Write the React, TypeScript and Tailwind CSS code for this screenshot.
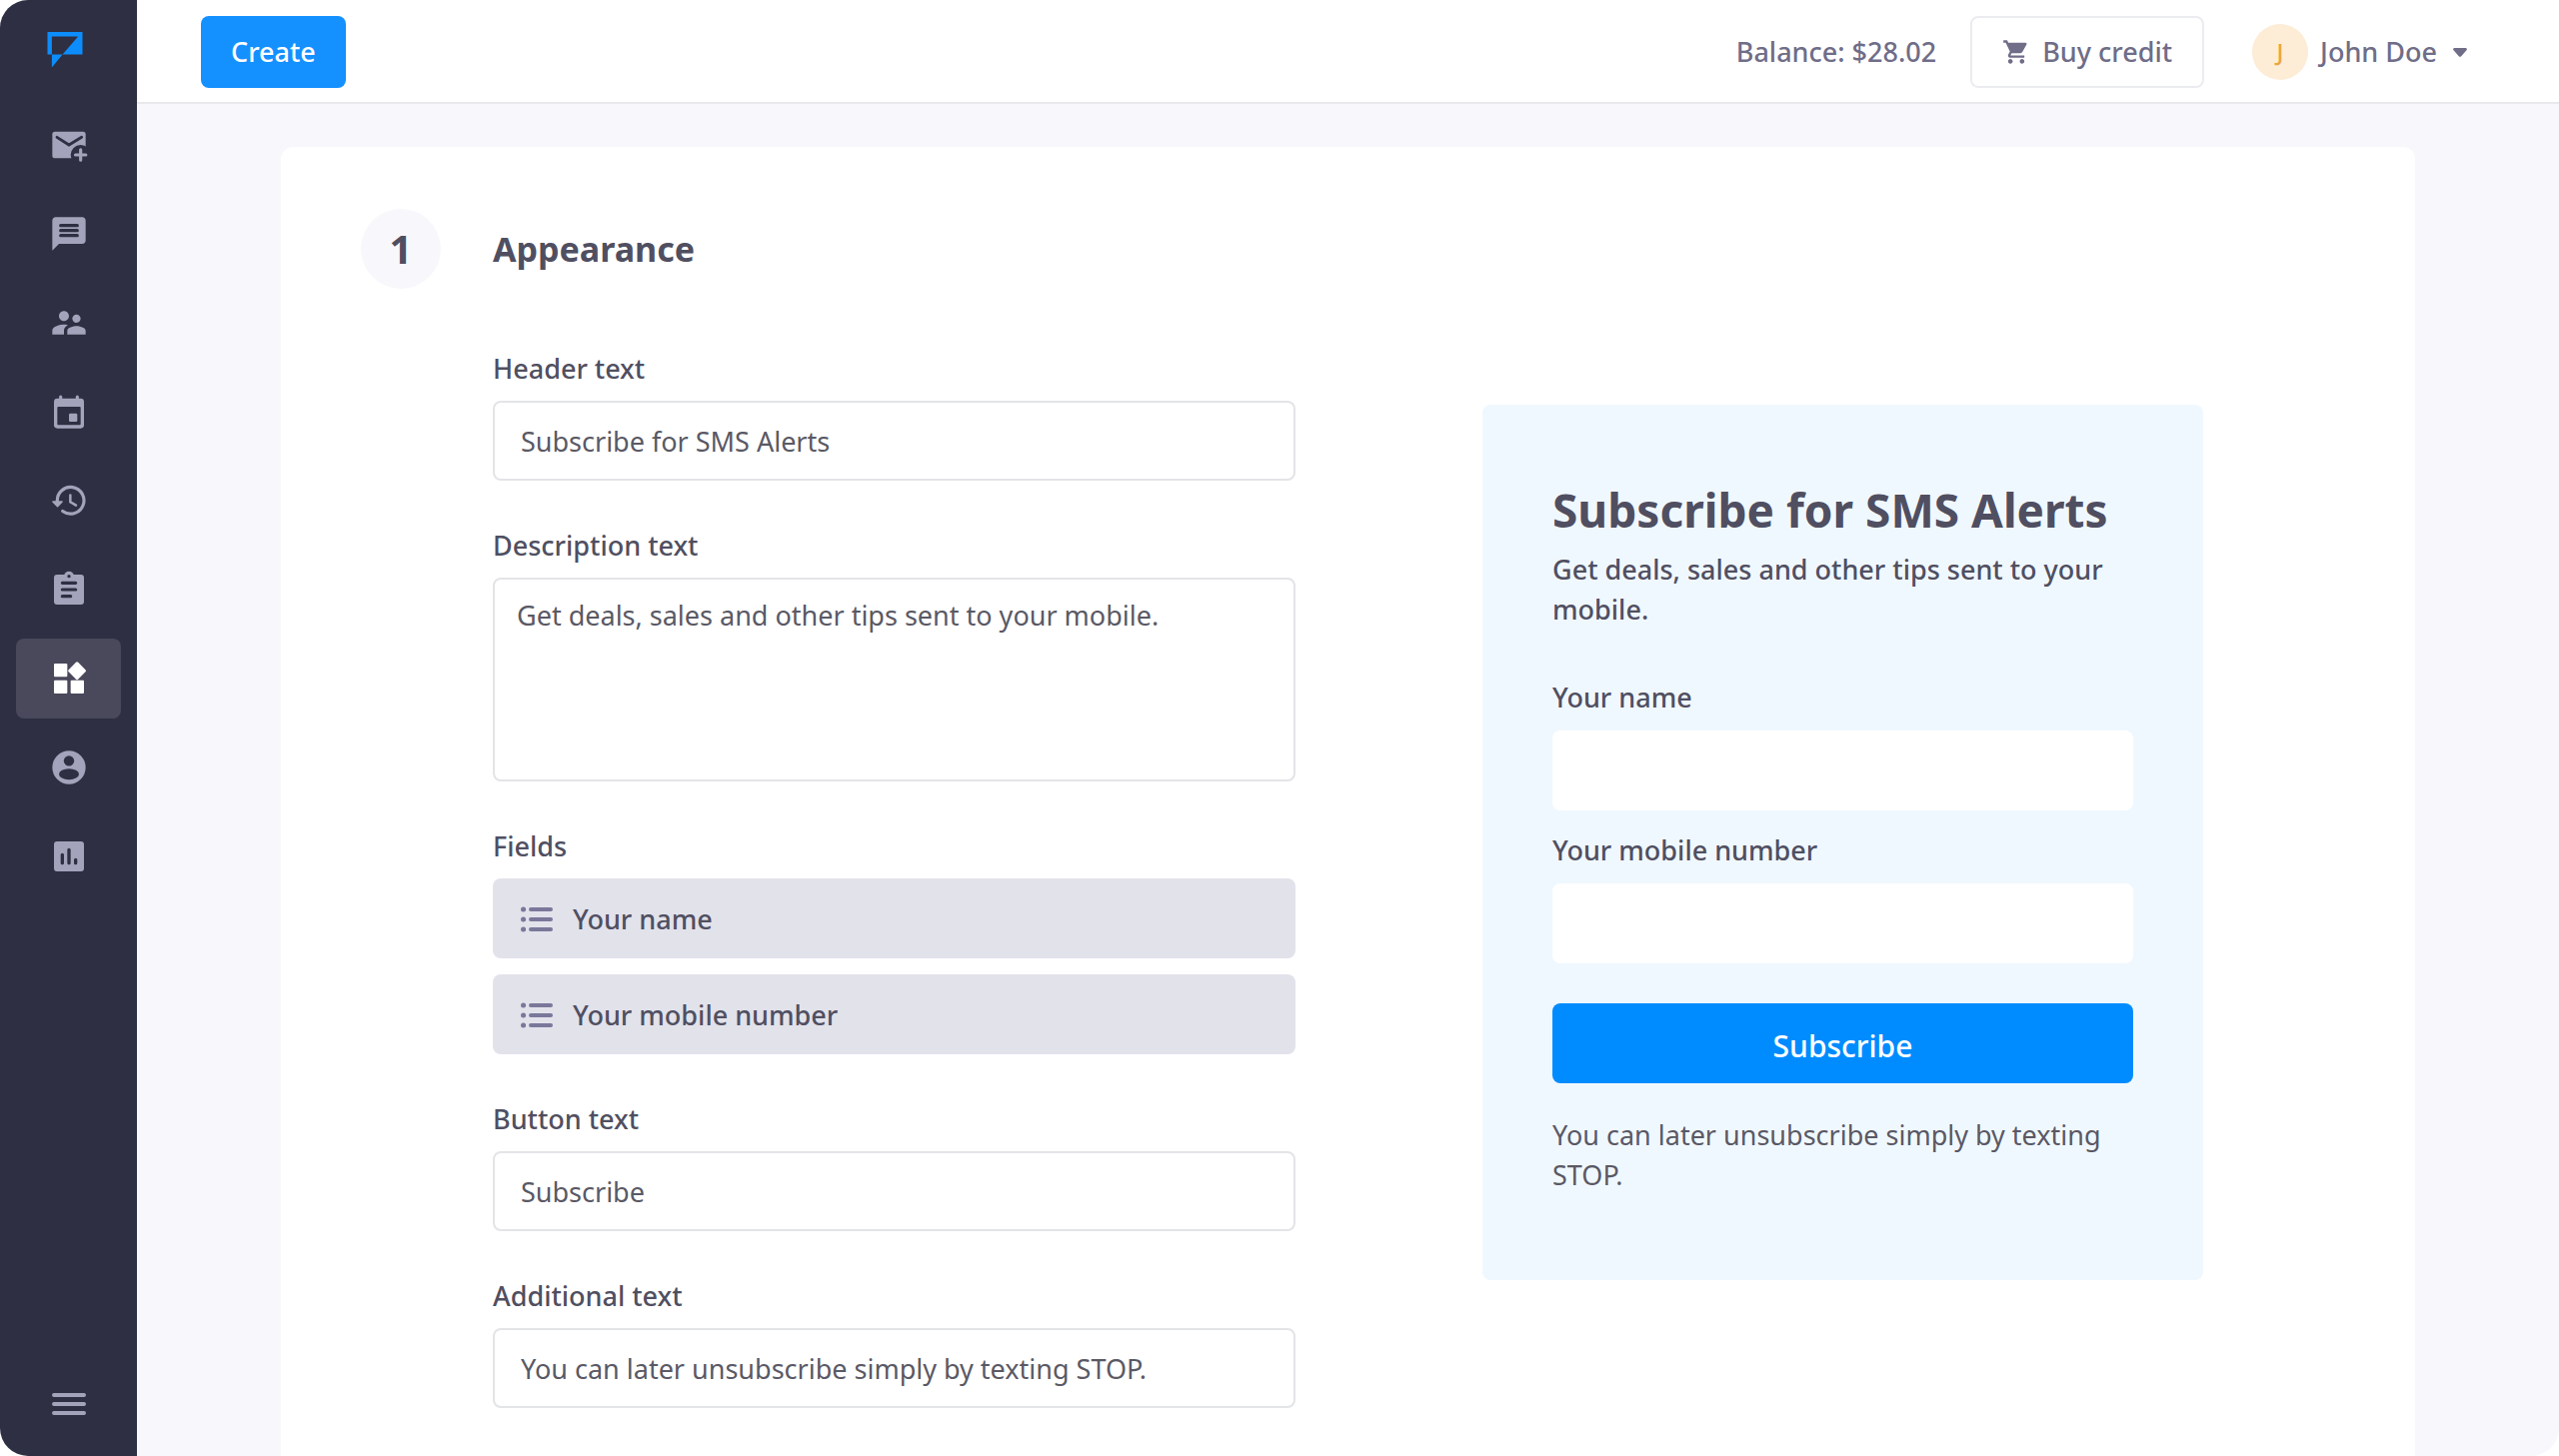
import type { ReactNode } from 'react'
import { MdShoppingCart, MdSupervisorAccount } from 'react-icons/md'
import { clsx } from 'clsx'

interface NavItem {
  label: string
  icon: ReactNode
  active?: boolean
}

const SIDEBAR = '#2e2f42'

function Icon({ children }: { children: ReactNode }) {
  return (
    <svg viewBox="0 0 24 24" className="w-10 h-10" fill="currentColor" aria-hidden="true">
      {children}
    </svg>
  )
}

const NAV_ITEMS: NavItem[] = [
  {
    label: 'New message',
    icon: (
      <Icon>
        <rect x="2" y="4" width="20" height="16" rx="1.6" />
        <path d="M4.8 7.4 12 12l7.6-4.6" fill="none" stroke={SIDEBAR} strokeWidth="1.7" strokeLinecap="round" />
        <circle cx="19" cy="18" r="6" fill={SIDEBAR} />
        <path d="M19 14.9v6.2M15.9 18h6.2" stroke="currentColor" strokeWidth="1.9" strokeLinecap="round" />
      </Icon>
    ),
  },
  {
    label: 'Chats',
    icon: (
      <Icon>
        <path d="M20 2H4c-1.1 0-2 .9-2 2v18l4-4h14c1.1 0 2-.9 2-2V4c0-1.1-.9-2-2-2z" />
        <path d="M7 7h10M7 10h10M7 13h10" stroke={SIDEBAR} strokeWidth="1.9" strokeLinecap="round" />
      </Icon>
    ),
  },
  { label: 'Contacts', icon: <MdSupervisorAccount className="w-10 h-10" /> },
  {
    label: 'Calendar',
    icon: (
      <Icon>
        <path d="M7 3v3M17 3v3" stroke="currentColor" strokeWidth="1.9" strokeLinecap="round" />
        <rect x="3" y="4" width="18" height="18" rx="2" />
        <rect x="5" y="9" width="14" height="11" rx="0.6" fill={SIDEBAR} />
        <rect x="12" y="13" width="5" height="5" rx="0.8" />
      </Icon>
    ),
  },
  {
    label: 'History',
    icon: (
      <Icon>
        <path d="M5 12.5A8 8 0 1 1 8.2 18.3" fill="none" stroke="currentColor" strokeWidth="1.9" strokeLinecap="round" />
        <path d="M2.4 12.1h5.4c.5 0 .7.5.4.8l-2.7 2.8c-.2.2-.5.2-.7 0L2 12.9c-.3-.3-.1-.8.4-.8z" />
        <path d="M12.8 8.7v4.1l3.4 2" fill="none" stroke="currentColor" strokeWidth="1.5" strokeLinecap="round" />
      </Icon>
    ),
  },
  {
    label: 'Templates',
    icon: (
      <Icon>
        <circle cx="12" cy="4" r="3" />
        <rect x="3" y="3" width="18" height="18" rx="1.8" />
        <circle cx="12" cy="4" r="1" fill={SIDEBAR} />
        <path d="M8 8h8M8 12h8M8 16h5" stroke={SIDEBAR} strokeWidth="1.9" strokeLinecap="round" />
      </Icon>
    ),
  },
  {
    label: 'Apps',
    active: true,
    icon: (
      <Icon>
        <rect x="3" y="3" width="8" height="8" rx="0.6" />
        <rect x="3" y="13" width="8" height="8" rx="0.6" />
        <rect x="13" y="13" width="8" height="8" rx="0.6" />
        <path d="M16.2 2.3l-4.4 4.4c-.4.4-.4.9 0 1.3l4.4 4.4c.4.4.9.4 1.3 0l4.4-4.4c.4-.4.4-.9 0-1.3l-4.4-4.4c-.4-.4-.9-.4-1.3 0z" />
      </Icon>
    ),
  },
  {
    label: 'Account',
    icon: (
      <Icon>
        <circle cx="12" cy="12" r="10" />
        <circle cx="12" cy="8" r="3.1" fill={SIDEBAR} />
        <ellipse cx="12" cy="16" rx="6" ry="3.3" fill={SIDEBAR} />
      </Icon>
    ),
  },
  {
    label: 'Reports',
    icon: (
      <Icon>
        <rect x="3" y="3" width="18" height="18" rx="1.8" />
        <path d="M8 11v5M12 8v8M16 14v2" stroke={SIDEBAR} strokeWidth="2" strokeLinecap="round" />
      </Icon>
    ),
  },
]

const FORM_FIELDS = ['Your name', 'Your mobile number']

function Logo() {
  return (
    <svg viewBox="0 0 36 37" className="w-9 h-9" fill="#0d8dfb" aria-hidden="true">
      <path d="M0 0h36v23H15.5L31.5 4.5H4.5V23H0z" />
      <path d="M4.5 23h11l-11 13.5z" />
    </svg>
  )
}

function Sidebar() {
  return (
    <aside className="flex w-[137px] shrink-0 flex-col items-center rounded-l-[28px] bg-[#2e2f42] text-[#a3a3bb]">
      <a href="#home" aria-label="Home" className="flex h-[105px] w-full items-start pl-[47px] pt-8">
        <Logo />
      </a>
      <nav className="flex w-full flex-col gap-[9px] px-4">
        {NAV_ITEMS.map((item) => (
          <a
            key={item.label}
            href="#nav"
            aria-label={item.label}
            className={clsx(
              'flex h-20 items-center justify-center rounded-lg',
              item.active && 'bg-[#4a485b] text-white',
            )}
          >
            {item.icon}
          </a>
        ))}
      </nav>
      <button type="button" aria-label="Toggle menu" className="mt-auto mb-8 flex h-10 w-10 items-center justify-center">
        <svg viewBox="0 0 34 24" className="w-[34px] h-6" stroke="currentColor" strokeWidth="4" strokeLinecap="round" aria-hidden="true">
          <path d="M2 3h30M2 12h30M2 21h30" />
        </svg>
      </button>
    </aside>
  )
}

function TopBar() {
  return (
    <header className="flex h-[104px] items-center border-b-2 border-[#e9e9ed] bg-white pl-16 pr-[92px] pt-0.5 font-medium text-[#6f6d88]">
      <button type="button" className="h-[72px] rounded-lg bg-[#1490ff] px-[30px] text-white">
        Create
      </button>
      <span className="ml-auto">Balance: $28.02</span>
      <button
        type="button"
        className="ml-[34px] flex h-[72px] items-center gap-3 rounded-lg border-2 border-[#ebecef] px-[30px]"
      >
        <MdShoppingCart className="h-7 w-7" />
        Buy credit
      </button>
      <button type="button" className="ml-12 flex items-center gap-3">
        <span className="flex h-14 w-14 items-center justify-center rounded-full bg-[#fdecd6] text-2xl text-[#eba63c]">
          J
        </span>
        John Doe
        <svg viewBox="0 0 14 9" className="ml-1 h-[9px] w-[14px]" fill="currentColor" aria-hidden="true">
          <path d="M1.5 0h11c1.2 0 1.8 1.3 1 2.2L8 8.4c-.6.6-1.4.6-2 0L.5 2.2C-.3 1.3.3 0 1.5 0z" />
        </svg>
      </button>
    </header>
  )
}

function Field({ id, label, children }: { id: string; label: string; children: ReactNode }) {
  return (
    <div className="flex flex-col gap-3">
      <label htmlFor={id} className="font-medium leading-10">
        {label}
      </label>
      {children}
    </div>
  )
}

function TextInput({ id, value }: { id: string; value: string }) {
  return (
    <input
      id={id}
      type="text"
      defaultValue={value}
      className="h-20 w-full rounded-lg border-2 border-[#e3e4e7] bg-white px-[26px] text-[#5a5965]"
    />
  )
}

function AppearanceForm() {
  return (
    <form className="flex w-[803px] flex-col gap-[45px]">
      <Field id="header-text" label="Header text">
        <TextInput id="header-text" value="Subscribe for SMS Alerts" />
      </Field>
      <Field id="description-text" label="Description text">
        <textarea
          id="description-text"
          defaultValue="Get deals, sales and other tips sent to your mobile."
          className="h-[204px] w-full resize-none rounded-lg border-2 border-[#e3e4e7] bg-white px-[22px] py-4 leading-10 text-[#5a5965]"
        />
      </Field>
      <div className="flex flex-col gap-3">
        <h3 className="font-medium leading-10">Fields</h3>
        <ul className="flex flex-col gap-4">
          {FORM_FIELDS.map((name) => (
            <li key={name} className="flex h-20 items-center gap-5 rounded-lg bg-[#e2e2eb] px-7 pt-0.5 font-medium">
              <svg viewBox="0 0 32 26" className="h-[26px] w-8 text-[#7a789a]" stroke="currentColor" strokeWidth="4" strokeLinecap="round" aria-hidden="true">
                <path d="M10 3h20M10 13h20M10 23h20" />
                <path d="M2.5 3h.1M2.5 13h.1M2.5 23h.1" strokeWidth="5" />
              </svg>
              {name}
            </li>
          ))}
        </ul>
      </div>
      <Field id="button-text" label="Button text">
        <TextInput id="button-text" value="Subscribe" />
      </Field>
      <Field id="additional-text" label="Additional text">
        <TextInput id="additional-text" value="You can later unsubscribe simply by texting STOP." />
      </Field>
    </form>
  )
}

function Preview() {
  return (
    <section className="mt-14 w-[721px] self-start rounded-lg bg-[#f0f8ff] px-[70px] pt-[73px] pb-[85px]">
      <h2 className="whitespace-nowrap text-[46px] font-bold leading-[64px]">Subscribe for SMS Alerts</h2>
      <p className="mt-2 font-medium leading-10">Get deals, sales and other tips sent to your mobile.</p>
      <div className="mt-12 flex flex-col gap-5">
        {FORM_FIELDS.map((name, i) => (
          <div key={name} className="flex flex-col gap-[13px]">
            <label htmlFor={`preview-${i}`} className="font-medium leading-10">
              {name}
            </label>
            <input id={`preview-${i}`} type="text" className="h-20 w-full rounded-lg bg-white px-6" />
          </div>
        ))}
      </div>
      <button type="button" className="mt-10 h-20 w-full rounded-lg bg-[#008cff] pt-1 text-[30px] font-medium text-white">
        Subscribe
      </button>
      <p className="mt-8 leading-10 text-[#5a5965]">You can later unsubscribe simply by texting STOP.</p>
    </section>
  )
}

export default function App() {
  return (
    <div className="flex h-screen overflow-hidden bg-white font-['Noto_Sans',sans-serif] text-[27px] text-[#504f61]">
      <Sidebar />
      <div className="flex min-w-0 flex-1 flex-col rounded-r-[28px] bg-[#f8f8fc]">
        <TopBar />
        <main className="flex min-h-0 flex-1 flex-col px-36 pt-[43px]">
          <section className="flex-1 rounded-t-xl bg-white pl-20 pr-[212px] pt-[62px]">
            <div className="flex items-center gap-[52px]">
              <span className="flex h-20 w-20 items-center justify-center rounded-full bg-[#f8f8fc] text-[40px] font-bold">
                1
              </span>
              <h1 className="text-[34px] font-bold">Appearance</h1>
            </div>
            <div className="mt-[60px] flex justify-between pl-[132px]">
              <AppearanceForm />
              <Preview />
            </div>
          </section>
        </main>
      </div>
    </div>
  )
}
